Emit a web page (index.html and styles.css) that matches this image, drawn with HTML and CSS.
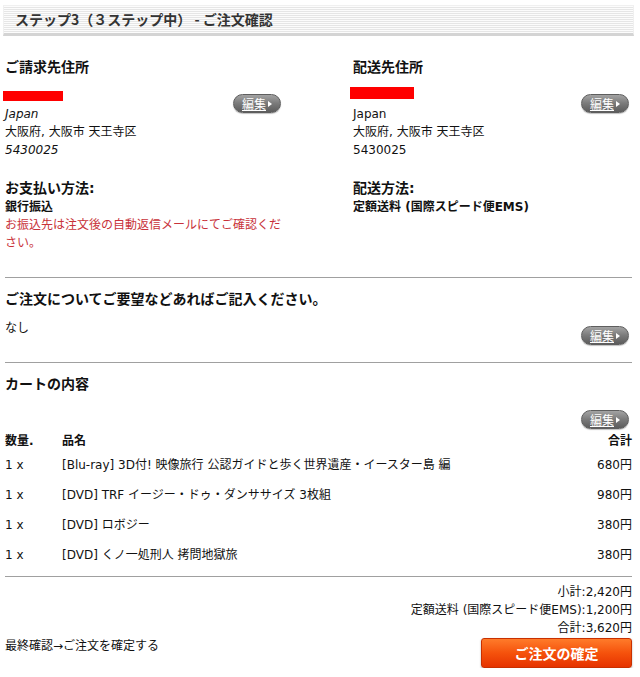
FILE: index.html
```html
<!DOCTYPE html>
<html lang="ja">
<head>
<meta charset="utf-8">
<link rel="stylesheet" href="styles.css">
</head>
<body>
<div class="page">
  <h1 class="step-title">ステップ3（３ステップ中） - ご注文確認</h1>

  <div class="cols">
    <div class="col col-left">
      <h2 class="sec-title">ご請求先住所</h2>
      <div class="addr">
        <a class="edit-btn" href="#">編集<span class="tri"></span></a>
        <div class="name-line"><span class="redact redact-l"></span></div>
        <div class="it">Japan</div>
        <div>大阪府, 大阪市 天王寺区</div>
        <div class="it">5430025</div>
      </div>
    </div>
    <div class="col col-right">
      <h2 class="sec-title">配送先住所</h2>
      <div class="addr">
        <a class="edit-btn" href="#">編集<span class="tri"></span></a>
        <div class="name-line"><span class="redact redact-r"></span></div>
        <div>Japan</div>
        <div>大阪府, 大阪市 天王寺区</div>
        <div>5430025</div>
      </div>
    </div>
  </div>

  <div class="cols methods">
    <div class="col col-left">
      <h2 class="sec-title">お支払い方法:</h2>
      <div class="method">銀行振込</div>
      <div class="note">お振込先は注文後の自動返信メールにてご確認ください。</div>
    </div>
    <div class="col col-right">
      <h2 class="sec-title">配送方法:</h2>
      <div class="method">定額送料 (国際スピード便EMS)</div>
    </div>
  </div>

  <hr class="rule rule-1">

  <h2 class="sec-title">ご注文についてご要望などあればご記入ください。</h2>
  <div class="comment-row">
    <span>なし</span>
    <a class="edit-btn" href="#">編集<span class="tri"></span></a>
  </div>

  <hr class="rule rule-2">

  <h2 class="sec-title">カートの内容</h2>
  <div class="cart-edit">
    <a class="edit-btn" href="#">編集<span class="tri"></span></a>
  </div>

  <table class="cart">
    <thead>
      <tr><th class="qty">数量.</th><th class="name">品名</th><th class="total">合計</th></tr>
    </thead>
    <tbody>
      <tr><td class="qty">1 x</td><td class="name">[Blu-ray] 3D付! 映像旅行 公認ガイドと歩く世界遺産・イースター島 編</td><td class="total">680円</td></tr>
      <tr><td class="qty">1 x</td><td class="name">[DVD] TRF イージー・ドゥ・ダンササイズ 3枚組</td><td class="total">980円</td></tr>
      <tr><td class="qty">1 x</td><td class="name">[DVD] ロボジー</td><td class="total">380円</td></tr>
      <tr><td class="qty">1 x</td><td class="name">[DVD] くノ一処刑人 拷問地獄旅</td><td class="total">380円</td></tr>
    </tbody>
  </table>

  <hr class="rule rule-3">

  <div class="totals">
    <div>小計:2,420円</div>
    <div>定額送料 (国際スピード便EMS):1,200円</div>
    <div>合計:3,620円</div>
  </div>

  <div class="confirm-row">
    <span>最終確認→ご注文を確定する</span>
    <button class="confirm-btn" type="button">ご注文の確定</button>
  </div>
</div>
</body>
</html>
```

FILE: styles.css
```css
html, body {
  margin: 0;
  padding: 0;
  background: #fff;
}
body {
  font-family: "DejaVu Sans", "Noto Sans CJK JP", sans-serif;
  font-size: 12px;
  line-height: 18px;
  color: #111;
}
.page {
  width: 627px;
  margin-left: 5px;
  padding-top: 5px;
}
.step-title {
  margin: 0 -2px;
  height: 27px;
  border: 1px solid #f0f0f0;
  border-bottom: 3px solid #d4d4d4;
  background: repeating-linear-gradient(to bottom, #fcfcfc 0 1px, #e6e6e6 1px 2px);
  font-family: "Noto Sans CJK JP", "DejaVu Sans", sans-serif;
  font-size: 14px;
  line-height: 27px;
  font-weight: bold;
  color: #333;
  padding-left: 11px;
}
.cols {
  display: flex;
  justify-content: space-between;
}
.col-left { width: 279px; }
.col-right { width: 282px; }
.cols:first-of-type { margin-top: 21px; }
.sec-title {
  margin: 0;
  font-size: 14px;
  line-height: 20px;
  font-weight: bold;
  color: #111;
}
.addr {
  margin-top: 10px;
}
.name-line {
  height: 18px;
  display: flex;
  align-items: center;
}
.redact {
  display: inline-block;
  background: #f00;
}
.redact-l { width: 60px; height: 10px; margin-left: -2px; }
.redact-r { width: 64px; height: 12px; margin-top: -6px; }
.col-right .addr { padding-left: 3px; }
.col-right .redact-r { margin-left: -3px; }
.it { font-style: italic; }

.edit-btn {
  float: right;
  margin: 7px 3px 0 0;
  width: 46px;
  height: 17px;
  border: 1px solid #5e5e5e;
  border-radius: 10px;
  background: linear-gradient(to bottom, #a3a3a3 0%, #7a7a7a 50%, #5c5c5c 100%);
  box-shadow: 0 1px 1px rgba(0,0,0,0.25);
  color: #fff;
  text-decoration: underline;
  font-family: "Noto Sans CJK JP", sans-serif;
  font-size: 12px;
  line-height: 17px;
  text-align: center;
  display: flex;
  align-items: center;
  justify-content: center;
  gap: 2px;
}
.tri {
  display: inline-block;
  width: 0;
  height: 0;
  border-left: 4px solid #fff;
  border-top: 3px solid transparent;
  border-bottom: 3px solid transparent;
}

.methods { margin-top: 19px; }
.col-right .method, .methods .col-right .sec-title { padding-left: 3px; }
.method { font-weight: bold; }
.note { color: #c8323a; }
.cols .col-right > .sec-title { padding-left: 3px; }

.rule {
  border: 0;
  border-top: 1px solid #a0a0a0;
  margin: 0;
  height: 0;
}
.rule-1 { margin-top: 25px; margin-bottom: 11px; }
.comment-row {
  margin-top: 10px;
  display: flex;
  justify-content: space-between;
  align-items: flex-start;
}
.comment-row .edit-btn { float: none; }
.rule-2 { margin-top: 17px; margin-bottom: 11px; }
.cart-edit {
  margin-top: 16px;
  height: 19px;
}
.cart-edit .edit-btn { margin-top: 0; }

.cart {
  width: 100%;
  border-collapse: collapse;
  margin-top: 3px;
}
.cart th, .cart td {
  padding: 0;
  text-align: left;
  vertical-align: middle;
}
.cart th { font-weight: bold; height: 18px; }
.cart td { height: 30px; }
.cart .qty { width: 57px; }
.cart .total { text-align: right; }

.rule-3 { margin-top: 6px; }
.totals {
  margin-top: 6px;
  text-align: right;
}
.confirm-row {
  display: flex;
  justify-content: space-between;
  align-items: flex-start;
}
.confirm-btn {
  margin-top: 1px;
  width: 151px;
  height: 30px;
  border: 1px solid #c83000;
  border-radius: 3px;
  background: linear-gradient(to bottom, #ff7b2a 0%, #f5520c 50%, #e63300 100%);
  box-shadow: 0 1px 2px rgba(0,0,0,0.35);
  color: #fff;
  font-family: "DejaVu Sans", "Noto Sans CJK JP", sans-serif;
  font-size: 14px;
  font-weight: bold;
  padding: 0;
}
```
